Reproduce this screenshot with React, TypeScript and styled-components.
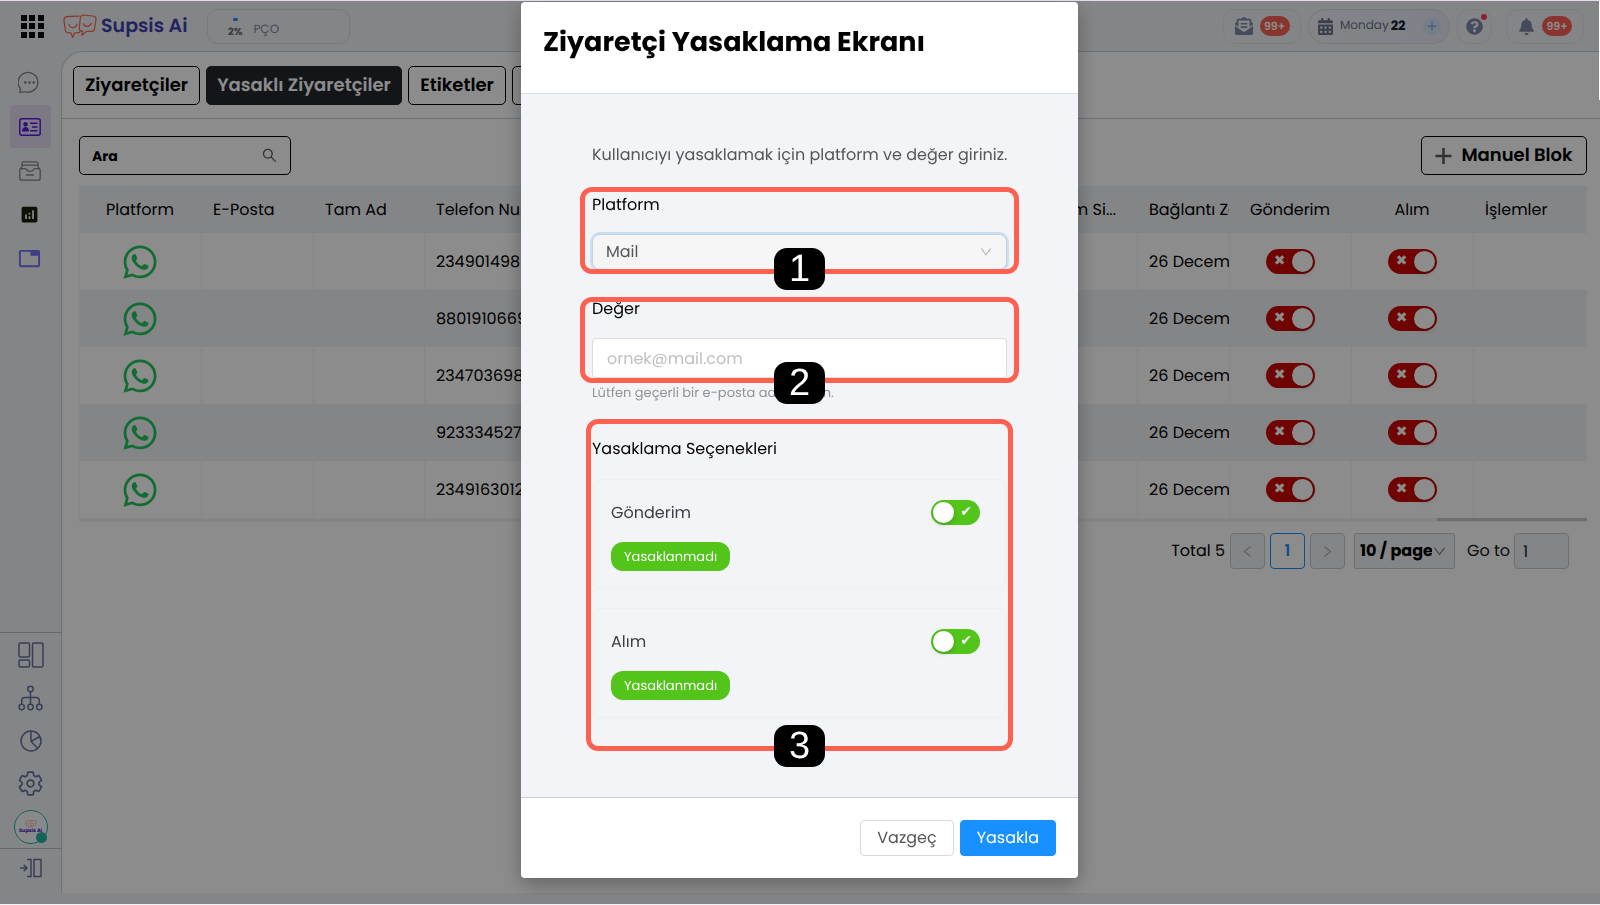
import React from "react";
import styled, { createGlobalStyle, css } from "styled-components";
import { AiOutlineDown, AiOutlineLeft, AiOutlinePlus, AiOutlineRight, AiOutlineSearch } from "react-icons/ai";
import { FaBell, FaCalendarAlt, FaEnvelopeOpenText, FaQuestionCircle } from "react-icons/fa";
import { IoSettingsOutline } from "react-icons/io5";
import { LiaWhatsapp } from "react-icons/lia";
import { MdAnalytics, MdOutlineTab } from "react-icons/md";

const color = {
  chrome: "#eff2f6",
  line: "#c4d1da",
  softLine: "#e2e6eb",
  slate: "#65749a",
  muted: "#7f89a8",
  danger: "#ca0806",
  success: "#52c41a",
  primary: "#1890ff",
  highlight: "#ff6151",
};

const GlobalStyle = createGlobalStyle`
  *, *::before, *::after { box-sizing: border-box; }
  body {
    margin: 0;
    background: ${color.chrome};
    color: #000;
    font: 400 16px/24px Poppins, Inter, "Liberation Sans", sans-serif;
    font-feature-settings: "cv11";
    text-rendering: geometricPrecision;
  }
  button, input, select { font: inherit; font-feature-settings: inherit; text-rendering: inherit; color: inherit; margin: 0; }
  button { cursor: pointer; }
  svg { display: block; flex: none; }
`;

/* ---------- Page shell ---------- */

const Shell = styled.div`
  min-height: 100vh;
  display: grid;
  grid-template: 50px 1fr / 61px minmax(0, 1fr);
  padding-bottom: 12px;
  border-top: 1px solid #e3dbe9;
`;

const Header = styled.header`
  grid-column: 1 / -1;
  display: flex;
  align-items: center;
  padding: 0 16px 0 21px;
`;

const Spacer = styled.div`
  flex: 1;
`;

const PlainButton = styled.button`
  display: grid;
  place-items: center;
  padding: 0;
  border: 0;
  background: none;
`;

const Brand = styled.a`
  display: flex;
  align-items: center;
  gap: 4px;
  width: 144px;
  margin-left: 19px;
  color: #3e40ad;
  font-size: 19px;
  font-weight: 600;
  text-decoration: none;
  white-space: nowrap;
`;

const Pill = styled.div<{ $width: number; $gap?: number }>`
  display: flex;
  align-items: center;
  justify-content: center;
  gap: 7px;
  width: ${(p) => p.$width}px;
  height: 35px;
  margin-left: ${(p) => p.$gap ?? 0}px;
  border: 1px solid ${color.softLine};
  border-radius: 12px;
  color: ${color.muted};
`;

const ScorePill = styled(Pill)`
  justify-content: flex-start;
  gap: 11px;
  padding: 7px 20px 0;
  border-color: #dadee4;
  border-radius: 10px;
  font-size: 12px;
  line-height: 16px;
`;

const Gauge = styled.div`
  display: flex;
  flex-direction: column;
  align-items: center;
  height: 30px;
  color: #6a6d73;
  font-size: 10px;
  font-weight: 700;
  line-height: 16px;

  &::before {
    content: "";
    width: 5px;
    height: 3px;
    margin: 3px 0;
    border-radius: 2px;
    background: ${color.primary};
  }
`;

const DatePill = styled(Pill)`
  justify-content: flex-start;
  gap: 6px;
  padding: 0 8px;
  border-color: #d5dde8;
  border-radius: 18px;
  background: linear-gradient(90deg, ${color.chrome}, #e4ebf5);
  color: #6a7388;
  font-size: 12px;

  strong {
    margin-left: -4px;
    color: #141c2c;
    font-size: 13px;
  }
`;

const AddButton = styled(PlainButton)`
  width: 18px;
  height: 18px;
  margin-left: auto;
  border-radius: 50%;
  background: #d6e4f5;
  color: #4a9eff;
`;

const Count = styled.span`
  width: 30px;
  border-radius: 10px;
  background: #fb6058;
  color: #fff;
  font-size: 11px;
  font-weight: 600;
  line-height: 20px;
  text-align: center;
`;

const HelpPill = styled(Pill)`
  position: relative;

  &::after {
    content: "";
    position: absolute;
    top: 4px;
    right: 4px;
    width: 6px;
    height: 6px;
    border-radius: 50%;
    background: #fb3d55;
  }
`;

/* ---------- Sidebar ---------- */

const Sidebar = styled.nav`
  display: flex;
  flex-direction: column;
  justify-content: space-between;
`;

const NavGroup = styled.div`
  display: flex;
  flex-direction: column;
  align-items: center;
  gap: 1px;
  padding-top: 10px;
  color: #80858f;
`;

const NavFooter = styled.div`
  border-top: 1px solid #b9bec6;
  color: ${color.slate};
`;

const NavEnd = styled(NavFooter)`
  padding-bottom: 6px;
`;

const NavButton = styled(PlainButton)<{ $active?: boolean }>`
  width: 41px;
  height: 43px;
  padding-right: 2px;
  border-radius: 4px;
  ${(p) => p.$active && css`background: #e2daf1; color: #5a1be0;`}
`;

const FooterButton = styled(PlainButton)<{ $short?: boolean }>`
  width: 100%;
  height: ${(p) => (p.$short ? 38 : 43)}px;
`;

const Avatar = styled.span`
  position: relative;
  display: flex;
  flex-direction: column;
  align-items: center;
  justify-content: center;
  width: 34px;
  height: 34px;
  border: 1px solid #26b5a4;
  border-radius: 50%;
  background: #f8f9fb;
  color: #4a1fc0;
  font-size: 5px;
  font-weight: 700;
  line-height: 6px;
  white-space: nowrap;

  &::after {
    content: "";
    position: absolute;
    right: 0;
    bottom: 0;
    width: 11px;
    height: 11px;
    border-radius: 50%;
    background: #26b5a4;
  }
`;

/* ---------- Main area ---------- */

const Content = styled.main`
  min-width: 0;
  border: solid ${color.line};
  border-width: 1px 0 0 1px;
  border-top-left-radius: 22px;
  background: #fff;
`;

const Tabs = styled.div`
  display: flex;
  gap: 6px;
  height: 67px;
  padding: 14px 11px;
  border-bottom: 1px solid ${color.line};
`;

const OutlineButton = styled.button<{ $width: number; $solid?: boolean }>`
  display: flex;
  align-items: center;
  justify-content: center;
  gap: 9px;
  width: ${(p) => p.$width}px;
  height: 39px;
  padding: 0;
  border: 1px solid ${(p) => (p.$solid ? "#24272f" : "#000")};
  border-radius: 5px;
  background: ${(p) => (p.$solid ? "#24272f" : "#fff")};
  color: ${(p) => (p.$solid ? "#fff" : "#000")};
  font-size: 18px;
  font-weight: 600;
  white-space: nowrap;
`;

const Panel = styled.section`
  padding: 17px 13px 24px 17px;
`;

const Toolbar = styled.div`
  display: flex;
  justify-content: space-between;
  margin-bottom: 11px;
`;

const SearchBox = styled.label`
  display: flex;
  align-items: center;
  width: 212px;
  height: 39px;
  padding: 0 12px;
  border: 1px solid #000;
  border-radius: 5px;
  color: #5c5f66;

  input {
    flex: 1;
    min-width: 0;
    padding: 0;
    border: 0;
    outline: 0;
    background: none;
    font-size: 14px;
  }
  input::placeholder { color: #000; font-weight: 700; opacity: 1; }
`;

const Table = styled.table`
  width: 100%;
  table-layout: fixed;
  border-collapse: separate;
  border-spacing: 0;

  th, td {
    overflow: hidden;
    padding: 0 2px 0 12px;
    font-weight: 400;
    text-align: left;
    white-space: nowrap;
  }
  th { height: 47px; background: ${color.chrome}; }
  td { height: 57px; padding-left: 11px; border-left: 1px solid #f0f2f5; }
  tbody tr:nth-child(even) td { background: ${color.chrome}; }
`;

const Cell = styled.div<{ $align?: "center" | "right" }>`
  display: flex;
  justify-content: ${(p) => p.$align ?? "flex-start"};
  padding-right: ${(p) => (p.$align === "center" ? 10 : p.$align === "right" ? 19 : 0)}px;
`;

const ScrollTrack = styled.div`
  display: flex;
  justify-content: flex-end;
  height: 4px;
  background: ${color.chrome};

  &::after {
    content: "";
    width: 150px;
    height: 3px;
    background: #c6c8ca;
  }
`;

const Switch = styled.label<{ $tone: string }>`
  display: flex;
  align-items: center;
  justify-content: space-between;
  width: 49px;
  height: 25px;
  padding: 0 2px;
  border-radius: 13px;
  background: ${(p) => p.$tone};
  color: #fff;

  span {
    flex: 1;
    font: 14px/25px "DejaVu Sans", sans-serif;
    text-align: center;
  }
  input {
    appearance: none;
    width: 21px;
    height: 21px;
    border-radius: 50%;
    background: #fff;
    box-shadow: 0 2px 4px rgba(0, 35, 11, 0.2);
  }
`;

const Pagination = styled.div`
  display: flex;
  align-items: center;
  justify-content: flex-end;
  gap: 5px;
  margin-top: 11px;
  padding-right: 18px;
`;

const PageButton = styled(PlainButton)<{ $current?: boolean }>`
  width: 35px;
  height: 36px;
  border: 1px solid ${(p) => (p.$current ? color.primary : "#c7cbd6")};
  border-radius: 4px;
  background: ${(p) => (p.$current ? "#fff" : color.chrome)};
  color: ${(p) => (p.$current ? color.primary : "#a9adb5")};
  font-weight: 600;
`;

const PageSize = styled.label`
  display: flex;
  align-items: center;
  width: 101px;
  height: 36px;
  margin: 0 7px 0 4px;
  padding: 0 7px 0 5px;
  border: 1px solid #c7cbd6;
  border-radius: 2px;
  background: ${color.chrome};
  color: #7d8087;

  select {
    appearance: none;
    flex: 1;
    min-width: 0;
    padding: 0;
    border: 0;
    background: none;
    color: #000;
    font-weight: 700;
  }
`;

const GoTo = styled.label`
  display: flex;
  align-items: center;
  gap: 4px;
  color: #16181d;

  input {
    width: 55px;
    height: 36px;
    padding: 0 8px;
    border: 1px solid #c7cbd6;
    border-radius: 4px;
    background: ${color.chrome};
  }
`;

/* ---------- Dialog ---------- */

const Backdrop = styled.div`
  position: fixed;
  inset: 1px 0;
  display: flex;
  align-items: flex-start;
  justify-content: center;
  padding: 1px 1px 0 0;
  overflow: auto;
  background: rgba(0, 0, 0, 0.45);

  &::after {
    content: "";
    position: absolute;
    top: 0;
    right: 0;
    width: 1px;
    height: 99px;
    background: #fff;
  }
`;

const Dialog = styled.section`
  width: 557px;
  border-radius: 4px;
  background: #fff;
  box-shadow: 0 6px 20px rgba(0, 0, 0, 0.3);
`;

const DialogHead = styled.header`
  padding: 24px 22px 33px;
  border-bottom: 1px solid #d8e0e8;

  h1 {
    margin: 0;
    font-size: 27px;
    font-weight: 700;
    line-height: 34px;
  }
`;

const DialogBody = styled.div`
  padding: 49px 71px 79px;
  background: #f3f4f8;
`;

const Intro = styled.p`
  margin: 0 0 26px;
  color: #55565a;
  white-space: nowrap;
`;

const Group = styled.div<{ $after?: number }>`
  position: relative;
  margin-bottom: ${(p) => p.$after ?? 0}px;
`;

const FieldLabel = styled.label`
  display: block;
  margin-bottom: 17px;
`;

const SelectBox = styled.div`
  display: flex;
  align-items: center;
  height: 36px;
  padding: 0 13px;
  border: 1px solid #cfd0d2;
  border-radius: 8px;
  background: #f5f5f5;
  box-shadow: 0 0 0 2px rgba(24, 144, 255, 0.2);
  color: #b3b4b6;

  select {
    appearance: none;
    flex: 1;
    min-width: 0;
    padding: 0;
    border: 0;
    outline: 0;
    background: none;
    color: #55565a;
    opacity: 1;
  }
`;

const TextField = styled.input`
  display: block;
  width: 100%;
  height: 40px;
  padding: 0 14px;
  border: 1px solid #dcdcde;
  border-radius: 4px;
  background: #fff;

  &::placeholder { color: #bfbfbf; opacity: 1; }
`;

const Hint = styled.p`
  margin: 4px 0 33px;
  color: #919296;
  font-size: 13px;
  line-height: 22px;
`;

const GroupTitle = styled.h2`
  margin: 0 0 18px;
  font-size: 16px;
  font-weight: 400;
  line-height: 24px;
`;

const OptionList = styled.div`
  display: flex;
  flex-direction: column;
  gap: 19px;
  padding: 0 1px;
`;

const OptionCard = styled.div`
  padding: 20px 25px 17px 17px;
  border: 1px solid #eeeff1;
  border-radius: 8px;
`;

const OptionRow = styled.div`
  display: flex;
  align-items: center;
  justify-content: space-between;
  height: 25px;
  margin-bottom: 17px;
  color: #3d3e42;
`;

const Tag = styled.span`
  display: block;
  width: max-content;
  padding: 0 13px;
  border-radius: 12px;
  background: ${color.success};
  color: #fff;
  font-size: 13px;
  line-height: 29px;
`;

const Marker = styled.div<{ $inset: string; $drop: number }>`
  position: absolute;
  inset: ${(p) => p.$inset};
  display: flex;
  align-items: flex-end;
  justify-content: center;
  border: 5px solid ${color.highlight};
  border-radius: 12px;
  pointer-events: none;

  b {
    width: 51px;
    margin-bottom: -${(p) => p.$drop}px;
    border-radius: 13px;
    background: #000;
    color: #fff;
    font: 400 38px/42px "Liberation Sans", Arial, sans-serif;
    text-align: center;
  }
`;

const DialogFoot = styled.footer`
  display: flex;
  justify-content: flex-end;
  gap: 6px;
  padding: 22px;
  border-top: 1px solid #c3ced9;
`;

const ActionButton = styled.button<{ $primary?: boolean }>`
  height: 36px;
  padding: 0 16px;
  border: 1px solid ${(p) => (p.$primary ? color.primary : "#d9d9d9")};
  border-radius: 4px;
  background: ${(p) => (p.$primary ? color.primary : "#fff")};
  color: ${(p) => (p.$primary ? "#fff" : "#55565a")};
`;

/* ---------- Icons ---------- */

const AppsIcon = () => (
  <svg width="23" height="23" viewBox="0 0 23 23" fill="#0c0d10">
    {[0, 8, 17].map((y) => [0, 8, 17].map((x) => <rect key={`${x}-${y}`} x={x} y={y} width="6" height="6" />))}
  </svg>
);

const BubblesIcon = ({ width, height }: { width: number; height: number }) => (
  <svg width={width} height={height} viewBox="0 0 34 25" fill="none" stroke="#fb6a50" strokeWidth="1.2" strokeLinecap="round" strokeLinejoin="round">
    <path d="M16 2.2 4 2.7C1.6 3 .7 4 1 6.500l1.300 9.500c.3 2 1.200 2.800 3.200 2.800h2.300l2 4.700 1.700-4.700h3.200c1.600 0 2.400-.6 2.700-1.800" />
    <path d="M20 1 30 2c2.300.3 3.200 1.500 3 3.500l-1.500 9.300c-.4 2-1.400 2.700-3.200 2.600h-4.800L19 21.300l.6-4.200h-1c-1.800-.3-2.500-1.300-2.300-3l1-10C17.600 2 18.300 1 20 1Z" />
    <path d="M6 10.500c.6 4 6.600 4.200 8-.3M20.500 9.500c1 3.700 6.300 3.800 7.800-.2" />
  </svg>
);

const ChatIcon = () => (
  <svg width="23" height="23" viewBox="0 0 24 24" fill="none" stroke="currentColor" strokeWidth="1.400" strokeLinejoin="round">
    <path d="M1.800 22.300c.8-1.500.9-2.600.4-4.300A10.300 10.300 0 1 1 8 21.800c-2-.2-4 .3-6.200.5Z" />
    <g fill="currentColor" stroke="none"><circle cx="7.600" cy="12" r="1.400" /><circle cx="12" cy="12" r="1.400" /><circle cx="16.400" cy="12" r="1.400" /></g>
  </svg>
);

const ContactIcon = () => (
  <svg width="22" height="18" viewBox="0 0 22 18" fill="none" stroke="currentColor" strokeWidth="1.500">
    <rect x=".8" y=".8" width="20.400" height="16.400" rx="2" />
    <path d="M11 5.200h7.500M13 9h5.500M11 12.800h7.500" />
    <g fill="currentColor" stroke="none"><circle cx="6.500" cy="6.300" r="2.200" /><path d="M3 13.500c0-3 1.500-4.500 3.500-4.500s3.500 1.500 3.500 4.500Z" /></g>
  </svg>
);

const ArchiveIcon = () => (
  <svg width="22" height="20" viewBox="0 0 22 20" fill="none" stroke="currentColor" strokeWidth="1.300" strokeLinejoin="round" strokeLinecap="round">
    <path d="M3 4.300V2.700C3 1.500 3.600.8 4.800.8h12.400c1.200 0 1.800.7 1.800 1.900v1.600" />
    <path d="M1.800 8 3 5.300c.3-.8.8-1.100 1.500-1.100h13c.7 0 1.200.3 1.500 1.100L20.200 8" />
    <path d="M.8 9c0-.8.4-1.300 1.200-1.300h4.200c1.500 0 1.700 2.500 3.300 2.500h3c1.600 0 1.800-2.500 3.300-2.500H20c.8 0 1.200.5 1.200 1.300v8c0 1.400-.8 2.200-2.200 2.200H3c-1.400 0-2.200-.8-2.200-2.200ZM7.500 14h7" />
  </svg>
);

const LayoutIcon = () => (
  <svg width="26" height="26" viewBox="0 0 26 26" fill="none" stroke="currentColor" strokeWidth="1.500">
    <rect x="1" y="1" width="10.500" height="14" rx="1.500" /><rect x="1" y="18" width="10.500" height="7" rx="1.500" /><rect x="14.500" y="1" width="10.500" height="24" rx="1.500" />
  </svg>
);

const TreeIcon = () => (
  <svg width="25" height="26" viewBox="0 0 25 26" fill="none" stroke="currentColor" strokeWidth="1.500">
    <circle cx="12.500" cy="4" r="2.700" /><circle cx="3.700" cy="22" r="2.700" /><circle cx="12.500" cy="22" r="2.700" /><circle cx="21.300" cy="22" r="2.700" />
    <path d="M12.500 6.700v12.600M3.700 19.300v-3.500c0-2 1.200-3.300 3.300-3.300h11c2.100 0 3.300 1.300 3.300 3.300v3.500" />
  </svg>
);

const PieIcon = () => (
  <svg width="22" height="22" viewBox="0 0 22 22" fill="none" stroke="currentColor" strokeWidth="1.500">
    <circle cx="11" cy="11" r="10" /><path d="M11 1v10.500l6.800 6.800M11 11.500l8.800-5" />
  </svg>
);

const ExpandIcon = () => (
  <svg width="22" height="20" viewBox="0 0 22 20" fill="none" stroke="currentColor" strokeWidth="1.500">
    <path d="M0 10h6.500M3.700 6.800 7 10l-3.300 3.200M7 1.500h4v17H7M14 1.500h7v17h-7Z" />
  </svg>
);

const PlusIcon = () => (
  <svg width="17" height="18" viewBox="0 0 17 18" fill="none" stroke="#55585c" strokeWidth="2.500">
    <path d="M8.500 1v16M.5 9h16" />
  </svg>
);

/* ---------- Parts ---------- */

const visitors = ["2349014989210", "8801910669314", "2347036981520", "9233345273180", "2349163012457"];

const BlockSwitch = ({ label }: { label: string }) => (
  <Switch $tone={color.danger}>
    <span>✖</span>
    <input type="checkbox" role="switch" aria-label={label} defaultChecked />
  </Switch>
);

const Option = ({ id, title }: { id: string; title: string }) => (
  <OptionCard>
    <OptionRow>
      <label htmlFor={id}>{title}</label>
      <Switch $tone={color.success}>
        <input id={id} type="checkbox" role="switch" />
        <span>✔</span>
      </Switch>
    </OptionRow>
    <Tag>Yasaklanmadı</Tag>
  </OptionCard>
);

const TopBar = () => (
  <Header>
    <PlainButton aria-label="Uygulamalar"><AppsIcon /></PlainButton>
    <Brand href="#"><BubblesIcon width={34} height={25} />Supsis Ai</Brand>
    <ScorePill $width={143}><Gauge>2%</Gauge>PÇO</ScorePill>
    <Spacer />
    <Pill $width={78}><FaEnvelopeOpenText size={18} /><Count>99+</Count></Pill>
    <DatePill $width={142} $gap={7}>
      <FaCalendarAlt size={17} />Monday <strong>22</strong>
      <AddButton aria-label="Ekle"><AiOutlinePlus size={12} /></AddButton>
    </DatePill>
    <HelpPill $width={35} $gap={7}><FaQuestionCircle size={17} /></HelpPill>
    <Pill $width={78} $gap={14}><FaBell size={17} /><Count>99+</Count></Pill>
  </Header>
);

const SideNav = () => (
  <Sidebar>
    <NavGroup>
      <NavButton aria-label="Sohbetler"><ChatIcon /></NavButton>
      <NavButton $active aria-label="Ziyaretçiler"><ContactIcon /></NavButton>
      <NavButton aria-label="Arşiv"><ArchiveIcon /></NavButton>
      <NavButton aria-label="Analiz"><MdAnalytics size={21} color="#142208" /></NavButton>
      <NavButton aria-label="Sekmeler"><MdOutlineTab size={23} color="#7370f5" /></NavButton>
    </NavGroup>
    <div>
      <NavFooter>
        <FooterButton aria-label="Panel"><LayoutIcon /></FooterButton>
        <FooterButton aria-label="Akış"><TreeIcon /></FooterButton>
        <FooterButton aria-label="Raporlar"><PieIcon /></FooterButton>
        <FooterButton aria-label="Ayarlar"><IoSettingsOutline size={27} /></FooterButton>
        <FooterButton aria-label="Profil"><Avatar><BubblesIcon width={12} height={8} />Supsis Ai</Avatar></FooterButton>
      </NavFooter>
      <NavEnd>
        <FooterButton $short aria-label="Menüyü genişlet"><ExpandIcon /></FooterButton>
      </NavEnd>
    </div>
  </Sidebar>
);

const VisitorTable = () => (
  <Table>
    <colgroup>
      <col style={{ width: 122 }} /><col style={{ width: 112 }} /><col style={{ width: 111 }} /><col style={{ width: 180 }} />
      <col /><col style={{ width: 133 }} /><col style={{ width: 92 }} /><col style={{ width: 122 }} />
      <col style={{ width: 122 }} /><col style={{ width: 114 }} />
    </colgroup>
    <thead>
      <tr>
        <th><Cell $align="center">Platform</Cell></th>
        <th>E-Posta</th>
        <th>Tam Ad</th>
        <th>Telefon Numarası</th>
        <th />
        <th><Cell $align="right">Bildirim Si...</Cell></th>
        <th>Bağlantı Zamanı</th>
        <th><Cell $align="center">Gönderim</Cell></th>
        <th><Cell $align="center">Alım</Cell></th>
        <th>İşlemler</th>
      </tr>
    </thead>
    <tbody>
      {visitors.map((phone) => (
        <tr key={phone}>
          <td><Cell $align="center"><LiaWhatsapp size={44} color="#1fc659" /></Cell></td>
          <td />
          <td />
          <td>{phone}</td>
          <td />
          <td />
          <td>26 December</td>
          <td><Cell $align="center"><BlockSwitch label={`${phone} gönderim`} /></Cell></td>
          <td><Cell $align="center"><BlockSwitch label={`${phone} alım`} /></Cell></td>
          <td />
        </tr>
      ))}
    </tbody>
  </Table>
);

const BanDialog = () => (
  <Backdrop>
    <Dialog role="dialog" aria-modal="true" aria-labelledby="ban-title">
      <DialogHead><h1 id="ban-title">Ziyaretçi Yasaklama Ekranı</h1></DialogHead>
      <DialogBody>
        <Intro>Kullanıcıyı yasaklamak için platform ve değer giriniz.</Intro>
        <Group $after={27}>
          <FieldLabel htmlFor="platform">Platform</FieldLabel>
          <SelectBox>
            <select id="platform" defaultValue="Mail"><option>Mail</option><option>Whatsapp</option></select>
            <AiOutlineDown size={14} />
          </SelectBox>
          <Marker $inset="-6px -12px -4px" $drop={21}><b>1</b></Marker>
        </Group>
        <Group>
          <FieldLabel htmlFor="value">Değer</FieldLabel>
          <TextField id="value" type="email" placeholder="ornek@mail.com" />
          <Marker $inset="0 -12px -5px" $drop={26}><b>2</b></Marker>
        </Group>
        <Hint>Lütfen geçerli bir e-posta adresi girin.</Hint>
        <Group>
          <GroupTitle>Yasaklama Seçenekleri</GroupTitle>
          <OptionList>
            <Option id="send" title="Gönderim" />
            <Option id="receive" title="Alım" />
          </OptionList>
          <Marker $inset="-18px -6px -33px" $drop={21}><b>3</b></Marker>
        </Group>
      </DialogBody>
      <DialogFoot>
        <ActionButton>Vazgeç</ActionButton>
        <ActionButton $primary>Yasakla</ActionButton>
      </DialogFoot>
    </Dialog>
  </Backdrop>
);

export default function App() {
  return (
    <>
      <GlobalStyle />
      <Shell>
        <TopBar />
        <SideNav />
        <Content>
          <Tabs>
            <OutlineButton $width={127}>Ziyaretçiler</OutlineButton>
            <OutlineButton $width={196} $solid>Yasaklı Ziyaretçiler</OutlineButton>
            <OutlineButton $width={98}>Etiketler</OutlineButton>
            <OutlineButton $width={140}>Segmentler</OutlineButton>
          </Tabs>
          <Panel>
            <Toolbar>
              <SearchBox><input type="search" placeholder="Ara" aria-label="Ara" /><AiOutlineSearch size={17} /></SearchBox>
              <OutlineButton $width={166}><PlusIcon />Manuel Blok</OutlineButton>
            </Toolbar>
            <VisitorTable />
            <ScrollTrack />
            <Pagination>
              <span>Total 5</span>
              <PageButton disabled aria-label="Önceki"><AiOutlineLeft size={15} /></PageButton>
              <PageButton $current>1</PageButton>
              <PageButton disabled aria-label="Sonraki"><AiOutlineRight size={15} /></PageButton>
              <PageSize><select aria-label="Sayfa boyutu"><option>10 / page</option></select><AiOutlineDown size={15} /></PageSize>
              <GoTo>Go to<input type="text" defaultValue="1" /></GoTo>
            </Pagination>
          </Panel>
        </Content>
      </Shell>
      <BanDialog />
    </>
  );
}
